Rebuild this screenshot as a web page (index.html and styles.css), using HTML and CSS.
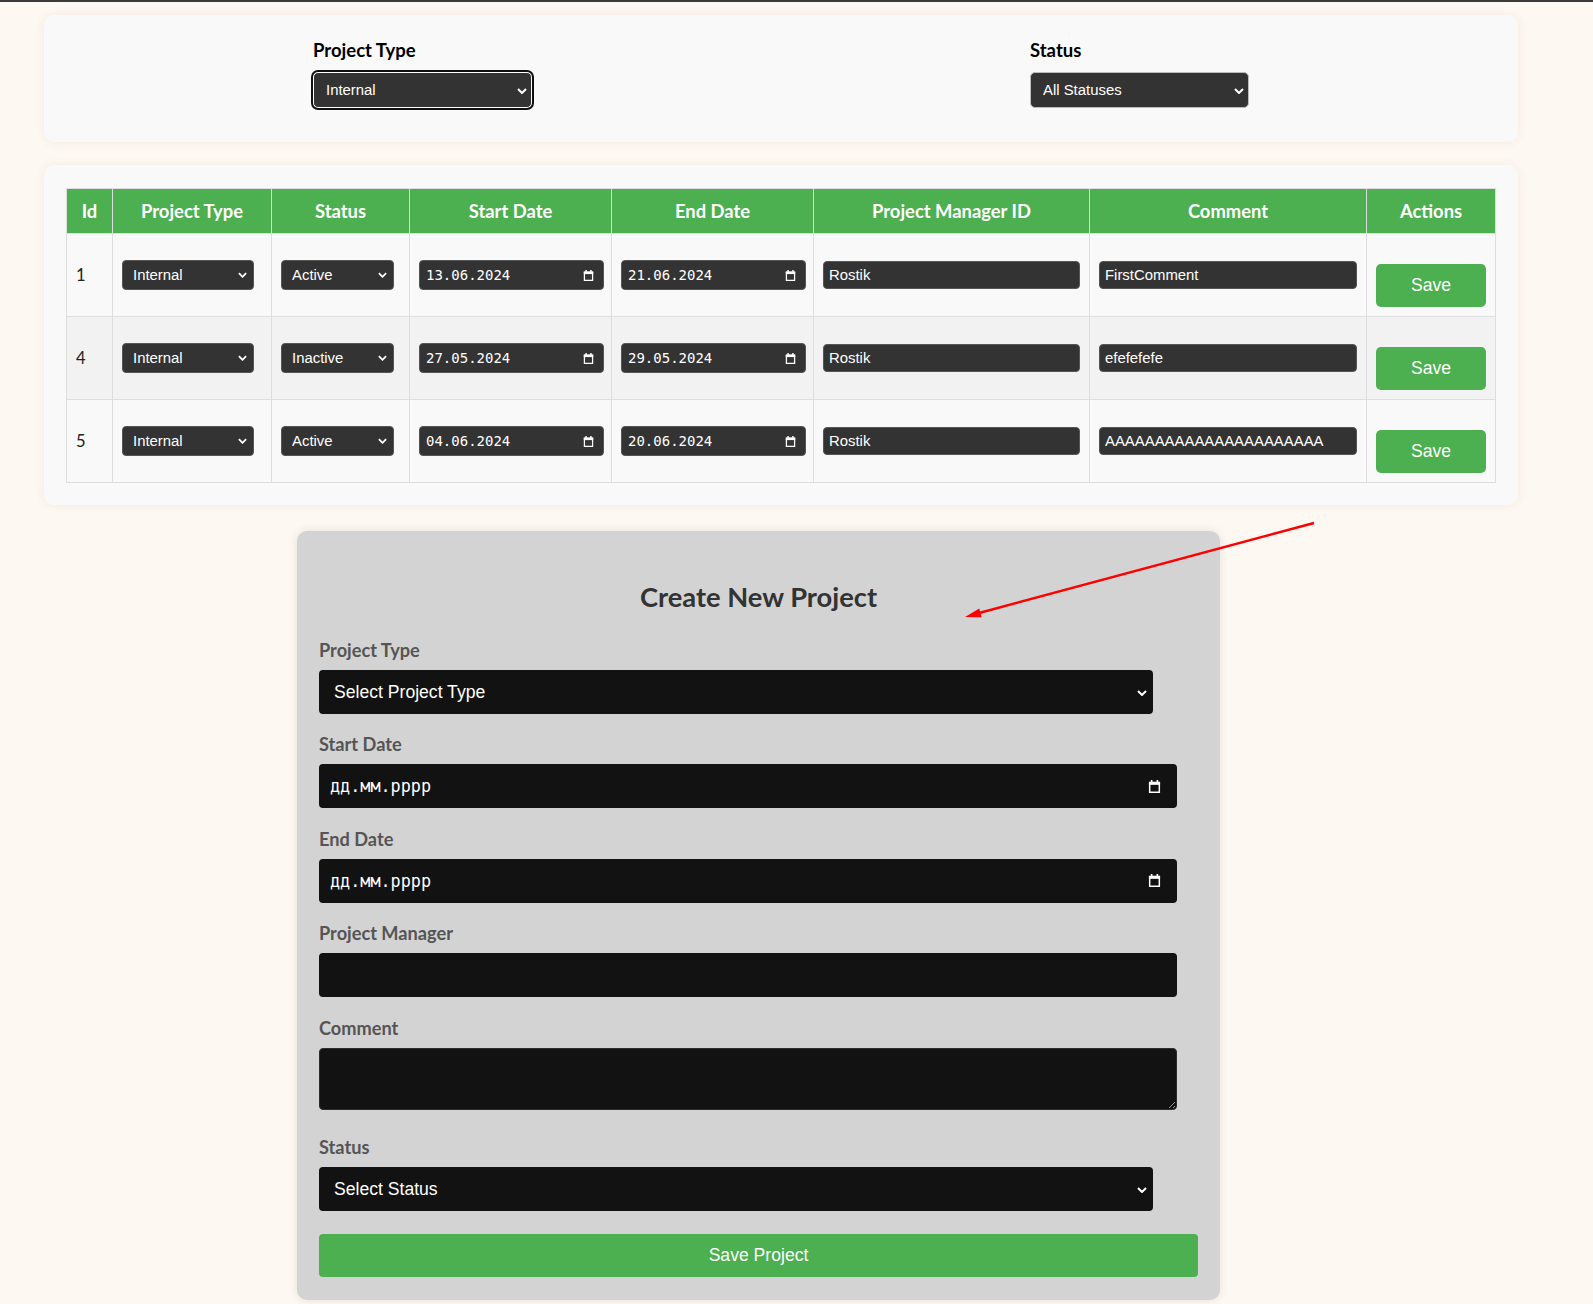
FILE: index.html
```html
<!DOCTYPE html>
<html lang="en">
<head>
<meta charset="utf-8">
<title>Projects</title>
<link rel="stylesheet" href="styles.css">
</head>
<body>
<div class="topbar"></div>
<main class="page">
  <section class="card filters">
    <div class="filter-group">
      <label class="filter-label" for="f-type">Project Type</label>
      <span class="select-wrap">
        <select id="f-type" class="filter-select is-focused"><option>Internal</option><option>External</option></select>
        <svg class="chev chev-filter" viewBox="0 0 10 6"><path d="M1 1L5 5L9 1"/></svg>
      </span>
    </div>
    <div class="filter-group">
      <label class="filter-label" for="f-status">Status</label>
      <span class="select-wrap">
        <select id="f-status" class="filter-select"><option>All Statuses</option><option>Active</option><option>Inactive</option></select>
        <svg class="chev chev-filter" viewBox="0 0 10 6"><path d="M1 1L5 5L9 1"/></svg>
      </span>
    </div>
  </section>

  <section class="card table-card">
    <table class="projects">
      <colgroup>
        <col class="col-id"><col class="col-type"><col class="col-status"><col class="col-date"><col class="col-date"><col class="col-pm"><col class="col-comment"><col class="col-actions">
      </colgroup>
      <thead>
        <tr><th>Id</th><th>Project Type</th><th>Status</th><th>Start Date</th><th>End Date</th><th>Project Manager ID</th><th>Comment</th><th>Actions</th></tr>
      </thead>
      <tbody>
        <tr>
          <td class="cell-id">1</td>
          <td><span class="select-wrap"><select class="cell-select w-type"><option>Internal</option><option>External</option></select><svg class="chev chev-cell" viewBox="0 0 10 6"><path d="M1 1L5 5L9 1"/></svg></span></td>
          <td><span class="select-wrap"><select class="cell-select w-status"><option>Active</option><option>Inactive</option></select><svg class="chev chev-cell" viewBox="0 0 10 6"><path d="M1 1L5 5L9 1"/></svg></span></td>
          <td><div class="date-box cell-date"><input type="text" value="13.06.2024"><svg class="cal" viewBox="0 0 14 16"><rect x="1.8" y="3.8" width="10.4" height="10.4" fill="none" stroke="#fff" stroke-width="1.6"/><rect x="1" y="3" width="12" height="3.2"/><rect x="3" y="1" width="1.8" height="3"/><rect x="9.2" y="1" width="1.8" height="3"/></svg></div></td>
          <td><div class="date-box cell-date"><input type="text" value="21.06.2024"><svg class="cal" viewBox="0 0 14 16"><rect x="1.8" y="3.8" width="10.4" height="10.4" fill="none" stroke="#fff" stroke-width="1.6"/><rect x="1" y="3" width="12" height="3.2"/><rect x="3" y="1" width="1.8" height="3"/><rect x="9.2" y="1" width="1.8" height="3"/></svg></div></td>
          <td><input class="cell-input" type="text" value="Rostik"></td>
          <td><input class="cell-input" type="text" value="FirstComment"></td>
          <td><button class="save-btn" type="button">Save</button></td>
        </tr>
        <tr>
          <td class="cell-id">4</td>
          <td><span class="select-wrap"><select class="cell-select w-type"><option>Internal</option><option>External</option></select><svg class="chev chev-cell" viewBox="0 0 10 6"><path d="M1 1L5 5L9 1"/></svg></span></td>
          <td><span class="select-wrap"><select class="cell-select w-status"><option>Inactive</option><option>Active</option></select><svg class="chev chev-cell" viewBox="0 0 10 6"><path d="M1 1L5 5L9 1"/></svg></span></td>
          <td><div class="date-box cell-date"><input type="text" value="27.05.2024"><svg class="cal" viewBox="0 0 14 16"><rect x="1.8" y="3.8" width="10.4" height="10.4" fill="none" stroke="#fff" stroke-width="1.6"/><rect x="1" y="3" width="12" height="3.2"/><rect x="3" y="1" width="1.8" height="3"/><rect x="9.2" y="1" width="1.8" height="3"/></svg></div></td>
          <td><div class="date-box cell-date"><input type="text" value="29.05.2024"><svg class="cal" viewBox="0 0 14 16"><rect x="1.8" y="3.8" width="10.4" height="10.4" fill="none" stroke="#fff" stroke-width="1.6"/><rect x="1" y="3" width="12" height="3.2"/><rect x="3" y="1" width="1.8" height="3"/><rect x="9.2" y="1" width="1.8" height="3"/></svg></div></td>
          <td><input class="cell-input" type="text" value="Rostik"></td>
          <td><input class="cell-input" type="text" value="efefefefe"></td>
          <td><button class="save-btn" type="button">Save</button></td>
        </tr>
        <tr>
          <td class="cell-id">5</td>
          <td><span class="select-wrap"><select class="cell-select w-type"><option>Internal</option><option>External</option></select><svg class="chev chev-cell" viewBox="0 0 10 6"><path d="M1 1L5 5L9 1"/></svg></span></td>
          <td><span class="select-wrap"><select class="cell-select w-status"><option>Active</option><option>Inactive</option></select><svg class="chev chev-cell" viewBox="0 0 10 6"><path d="M1 1L5 5L9 1"/></svg></span></td>
          <td><div class="date-box cell-date"><input type="text" value="04.06.2024"><svg class="cal" viewBox="0 0 14 16"><rect x="1.8" y="3.8" width="10.4" height="10.4" fill="none" stroke="#fff" stroke-width="1.6"/><rect x="1" y="3" width="12" height="3.2"/><rect x="3" y="1" width="1.8" height="3"/><rect x="9.2" y="1" width="1.8" height="3"/></svg></div></td>
          <td><div class="date-box cell-date"><input type="text" value="20.06.2024"><svg class="cal" viewBox="0 0 14 16"><rect x="1.8" y="3.8" width="10.4" height="10.4" fill="none" stroke="#fff" stroke-width="1.6"/><rect x="1" y="3" width="12" height="3.2"/><rect x="3" y="1" width="1.8" height="3"/><rect x="9.2" y="1" width="1.8" height="3"/></svg></div></td>
          <td><input class="cell-input" type="text" value="Rostik"></td>
          <td><input class="cell-input" type="text" value="AAAAAAAAAAAAAAAAAAAAAA"></td>
          <td><button class="save-btn" type="button">Save</button></td>
        </tr>
      </tbody>
    </table>
  </section>

  <section class="create-card">
    <h2 class="create-title">Create New Project</h2>
    <div class="form-group">
      <label class="form-label" for="n-type">Project Type</label>
      <span class="select-wrap form-wrap">
        <select id="n-type" class="form-select"><option>Select Project Type</option><option>Internal</option><option>External</option></select>
        <svg class="chev chev-form" viewBox="0 0 10 6"><path d="M1 1L5 5L9 1"/></svg>
      </span>
    </div>
    <div class="form-group">
      <label class="form-label" for="n-start">Start Date</label>
      <div class="date-box form-date"><input id="n-start" type="text" placeholder="дд.мм.рррр"><svg class="cal" viewBox="0 0 14 16"><rect x="1.8" y="3.8" width="10.4" height="10.4" fill="none" stroke="#fff" stroke-width="1.6"/><rect x="1" y="3" width="12" height="3.2"/><rect x="3" y="1" width="1.8" height="3"/><rect x="9.2" y="1" width="1.8" height="3"/></svg></div>
    </div>
    <div class="form-group">
      <label class="form-label" for="n-end">End Date</label>
      <div class="date-box form-date"><input id="n-end" type="text" placeholder="дд.мм.рррр"><svg class="cal" viewBox="0 0 14 16"><rect x="1.8" y="3.8" width="10.4" height="10.4" fill="none" stroke="#fff" stroke-width="1.6"/><rect x="1" y="3" width="12" height="3.2"/><rect x="3" y="1" width="1.8" height="3"/><rect x="9.2" y="1" width="1.8" height="3"/></svg></div>
    </div>
    <div class="form-group">
      <label class="form-label" for="n-pm">Project Manager</label>
      <input id="n-pm" class="form-input" type="text">
    </div>
    <div class="form-group">
      <label class="form-label" for="n-comment">Comment</label>
      <textarea id="n-comment" class="form-textarea"></textarea>
    </div>
    <div class="form-group">
      <label class="form-label" for="n-status">Status</label>
      <span class="select-wrap form-wrap">
        <select id="n-status" class="form-select"><option>Select Status</option><option>Active</option><option>Inactive</option></select>
        <svg class="chev chev-form" viewBox="0 0 10 6"><path d="M1 1L5 5L9 1"/></svg>
      </span>
    </div>
    <button class="save-project" type="button">Save Project</button>
  </section>
</main>

<svg class="annotation" width="1593" height="1304" viewBox="0 0 1593 1304" aria-hidden="true">
  <line x1="1314" y1="523" x2="979" y2="613" stroke="#ff0000" stroke-width="2.5"/>
  <polygon points="965,617 981.6,617.2 979.3,608.5" fill="#ff0000"/>
</svg>
</body>
</html>
```

FILE: styles.css
```css
html, body {
  margin: 0;
}

body {
  background: #fef8f2;
  font-family: Lato, "Liberation Sans", sans-serif;
  color: #333;
  position: relative;
  min-height: 1304px;
}

.topbar {
  height: 2px;
  background: #3b3b3b;
}

.page {
  padding: 13px 0 6px 44px;
}

.card {
  width: 1474px;
  box-sizing: border-box;
  background: #f9f9f9;
  border-radius: 10px;
  box-shadow: 0 0 10px rgba(140, 90, 40, 0.09);
}

/* Filters */
.filters {
  display: flex;
  justify-content: space-around;
  padding: 24px 20px 34px;
}

.filter-group {
  display: flex;
  flex-direction: column;
  width: 219px;
}

.filter-label {
  font-weight: 700;
  font-size: 18.5px;
  line-height: 22px;
  color: #000;
  margin-bottom: 11px;
}

.select-wrap {
  position: relative;
  display: inline-flex;
  vertical-align: middle;
}

select {
  -webkit-appearance: none;
  appearance: none;
  margin: 0;
  font-family: "Liberation Sans", Arial, sans-serif;
  color: #fff;
  box-sizing: border-box;
  outline: none;
}

.filter-select {
  width: 219px;
  height: 36px;
  background: #333;
  border: 1px solid #bdbdbd;
  border-radius: 5px;
  padding: 0 0 0 12px;
  font-size: 14.9px;
}

.filter-select.is-focused {
  border-color: #fff;
  outline: 2px solid #101010;
  outline-offset: 0;
}

.chev {
  position: absolute;
  top: 50%;
  fill: none;
  stroke: #fff;
  stroke-width: 2;
  pointer-events: none;
}

.chev-filter {
  width: 10px;
  height: 6px;
  right: 5px;
  margin-top: -2px;
}

.chev-cell {
  width: 9px;
  height: 6px;
  right: 7px;
  margin-top: -3px;
}

.chev-form {
  width: 10px;
  height: 6px;
  right: 6px;
  margin-top: -2px;
}

/* Table */
.table-card {
  margin-top: 23px;
  padding: 23px 23px 22px 22px;
}

.projects {
  border-collapse: collapse;
  table-layout: fixed;
  width: 1429px;
}

.col-id { width: 46px; }
.col-type { width: 159px; }
.col-status { width: 138px; }
.col-date { width: 202px; }
.col-pm { width: 276px; }
.col-comment { width: 277px; }
.col-actions { width: 129px; }

.projects th {
  background: #4caf50;
  color: #fff;
  font-weight: 700;
  font-size: 18.4px;
  line-height: 22px;
  padding: 11px 9px;
  border: 1px solid #ddd;
  text-align: center;
}

.projects td {
  border: 1px solid #ddd;
  padding: 9px;
  vertical-align: middle;
  font-size: 16.5px;
  color: #222;
}

.projects tbody tr:nth-child(even) {
  background: #f2f2f2;
}

.cell-select {
  height: 30px;
  background: #333;
  border: 1px solid #555;
  border-radius: 4px;
  padding: 0 0 0 10px;
  font-size: 14.9px;
}

.w-type { width: 132px; }
.w-status { width: 113px; }

.date-box {
  display: flex;
  align-items: center;
  box-sizing: border-box;
  background: #333;
  border: 1px solid #555;
  border-radius: 4px;
}

.date-box input {
  flex: 1;
  min-width: 0;
  background: transparent;
  border: 0;
  padding: 0;
  margin: 0;
  color: #fff;
  font-family: "DejaVu Sans Mono", "Liberation Mono", monospace;
  outline: none;
}

.date-box input::placeholder {
  color: #fff;
  opacity: 1;
}

.cal {
  flex: none;
  fill: #fff;
}

.cell-date {
  width: 185px;
  height: 30px;
  padding: 0 9px 0 6px;
}

.cell-date input {
  font-size: 14px;
}

.cell-date .cal {
  width: 11px;
  height: 13px;
}

.cell-input {
  display: block;
  box-sizing: border-box;
  width: 100%;
  height: 28px;
  margin: 0;
  background: #333;
  border: 1px solid #555;
  border-radius: 4px;
  color: #fff;
  padding: 0 5px;
  font: 14.9px "Liberation Sans", Arial, sans-serif;
  outline: none;
}

.save-btn {
  display: block;
  width: 100%;
  height: 43px;
  margin: 21px 0 0;
  background: #4caf50;
  border: 0;
  border-radius: 5px;
  color: #fff;
  font: 17.6px "Liberation Sans", Arial, sans-serif;
}

/* Create form */
.create-card {
  width: 923px;
  box-sizing: border-box;
  margin: 26px 0 0 253px;
  padding: 22px 22px 23px;
  background: #d3d3d3;
  border-radius: 10px;
  box-shadow: 0 0 10px rgba(0, 0, 0, 0.1);
}

.create-title {
  margin: 26.5px 0 25px;
  text-align: center;
  font-size: 27.3px;
  line-height: 34px;
  font-weight: 700;
  color: #333;
}

.form-group {
  display: flow-root;
  margin-bottom: 19.5px;
}

.form-label {
  display: block;
  font-weight: 700;
  font-size: 18.2px;
  line-height: 22px;
  color: #555;
  margin-bottom: 9px;
}

.form-wrap {
  display: flex;
  width: 834px;
}

.form-select {
  width: 834px;
  height: 44px;
  background: #121212;
  border: 0;
  border-radius: 4px;
  padding: 0 0 0 15px;
  font-size: 17.6px;
}

.form-date {
  width: 858px;
  height: 44px;
  padding: 0 16px 0 11px;
  background: #121212;
  border: 0;
}

.form-date input {
  font-size: 16.8px;
}

.form-date .cal {
  width: 13px;
  height: 15px;
}

.form-input {
  display: block;
  box-sizing: border-box;
  width: 858px;
  height: 44px;
  margin: 0;
  background: #121212;
  border: 0;
  border-radius: 4px;
  color: #fff;
  padding: 0 11px;
  font: 17.6px "Liberation Sans", Arial, sans-serif;
  outline: none;
}

.form-textarea {
  display: block;
  box-sizing: border-box;
  width: 858px;
  height: 62px;
  margin: 0 0 7px;
  background: #121212;
  border: 1px solid #2c2c2c;
  border-radius: 4px;
  color: #fff;
  padding: 8px 11px;
  font: 17.6px "Liberation Sans", Arial, sans-serif;
  outline: none;
}

.save-project {
  display: block;
  width: 100%;
  height: 43px;
  margin: 23px 0 0;
  background: #4caf50;
  color: #fff;
  border: 0;
  border-radius: 4px;
  font: 17.6px "Liberation Sans", Arial, sans-serif;
}

.annotation {
  position: absolute;
  top: 0;
  left: 0;
  pointer-events: none;
}
```
